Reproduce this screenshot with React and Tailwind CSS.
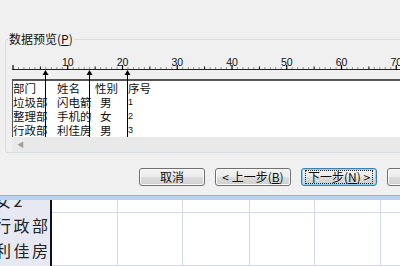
import React from 'react';

const rows = [
  ['部门', '姓名', '性别', '序号'],
  ['垃圾部', '闪电箭', '男', '1'],
  ['整理部', '手机的', '女', '2'],
  ['行政部', '利佳房', '男', '3'],
];

const STEP = 5.475;
const ORIGIN = 1;
const markers = [33, 77, 115];

const Ruler = () => {
  const ticks = [];
  for (let i = 0; i <= 72; i++) {
    const x = ORIGIN + i * STEP;
    if (i % 10 === 0) {
      ticks.push(<line key={i} x1={x} x2={x} y1={10} y2={15} stroke="#000" strokeWidth="1.2" />);
      if (i > 0) {
        ticks.push(
          <text key={`t${i}`} x={x} y={10.5} fontSize="10.5" textAnchor="middle" fontFamily="Liberation Sans, sans-serif" fill="#111">
            {i}
          </text>
        );
      }
    } else if (i % 5 === 0) {
      ticks.push(<line key={i} x1={x} x2={x} y1={11.5} y2={14} stroke="#000" strokeWidth="1" />);
    } else {
      ticks.push(<rect key={i} x={x - 0.5} y={12.5} width="1" height="1" fill="#333" />);
    }
  }
  return (
    <svg width="390" height="24" className="block">
      <line x1="0.5" x2="390" y1="14.5" y2="14.5" stroke="#222" strokeWidth="1" />
      {ticks}
    </svg>
  );
};

const Markers = () => (
  <svg width="390" height="84" className="absolute left-0 top-0 pointer-events-none">
    {markers.map((x) => (
      <g key={x}>
        <polygon points={`${x + 0.5},15 ${x - 2.5},20 ${x + 3.5},20`} fill="#000" />
        <line x1={x + 0.5} x2={x + 0.5} y1="19" y2="82" stroke="#000" strokeWidth="1" />
      </g>
    ))}
  </svg>
);

const Btn = ({ children, focus, className = '' }) => (
  <div
    className={`h-[18px] shrink-0 flex items-center justify-center rounded-[3px] border ${
      focus ? 'border-[#3c7fb1] shadow-[inset_0_0_0_1px_#8fd0f5]' : 'border-[#707070] shadow-[inset_0_0_0_1px_#fcfcfc]'
    } bg-[linear-gradient(#f3f3f3_0%,#ebebeb_50%,#dddddd_51%,#cfcfcf_100%)] text-[12px] leading-[14px] text-[#111] ${className}`}
  >
    {focus ? <span className="border border-dotted border-[#222] px-[2px] leading-[12px]">{children}</span> : children}
  </div>
);

const App = () => {
  return (
    <div className="w-[400px] h-[266px] overflow-hidden bg-[#f0f0f0] flex flex-col font-['Noto_Sans_CJK_SC',sans-serif] text-[#111]">
      <div className="h-[195px] shrink-0 pt-[39px] pl-[5px]">
        <div className="relative w-[430px] border border-[#d5dfe5] rounded-[3px] pt-[15px] pl-[6px]">
          <span className="absolute left-[2px] top-[-8px] bg-[#f0f0f0] px-[1px] text-[12px] leading-[14px]">
            数据预览(<u>P</u>)
          </span>
          <div className="relative">
            <Ruler />
            <div className="bg-white border-t-2 border-l border-[#555] text-[11.5px] leading-[14px] h-[58px]">
              {rows.map((r, i) => (
                <div key={i} className="flex h-[14px] whitespace-nowrap">
                  <div className="w-[44px]">{r[0]}</div>
                  <div className="w-[38px]">{r[1]}</div>
                  <div className={`w-[33px] ${i ? 'pl-[5px]' : ''}`}>{r[2]}</div>
                  <div className={i ? "text-[9px] font-['Liberation_Sans',sans-serif]" : ''}>{r[3]}</div>
                </div>
              ))}
            </div>
            <div className="h-[15px] bg-[#e9e9e9] flex items-center pl-[5px]">
              <span className="text-[7px] leading-none text-[#a0a0a0]">◀</span>
            </div>
            <Markers />
          </div>
        </div>
        <div className="flex mt-[15px] pl-[134px] gap-[10px]">
          <Btn className="w-[66px]">取消</Btn>
          <Btn className="w-[76px]">&lt; 上一步(<u>B</u>)</Btn>
          <Btn className="w-[76px]" focus>下一步(<u>N</u>) &gt;</Btn>
          <Btn className="w-[76px]" />
        </div>
      </div>
      <div className="h-[5px] shrink-0 bg-[#b9d3ee] border-t border-[#8fb0d3]" />
      <div className="flex flex-1 bg-white">
        <div className="w-[52px] shrink-0 bg-[#e6e9f1] border-r-2 border-[#111] overflow-hidden">
          <div className="-mt-[12px] -ml-[5px] text-[16px] leading-[25px] tracking-[2.5px] whitespace-nowrap text-[#222]">
            <div>女2</div>
            <div>行政部</div>
            <div>利佳房</div>
          </div>
        </div>
        <div className="flex-1 grid grid-cols-[66px_65px_67px_65px_66px_66px] grid-rows-[13px_1fr]">
          {Array.from({ length: 12 }).map((_, i) => (
            <div key={i} className="border-r border-b border-[#d4dbe8]" />
          ))}
        </div>
      </div>
    </div>
  );
};

export default App;
